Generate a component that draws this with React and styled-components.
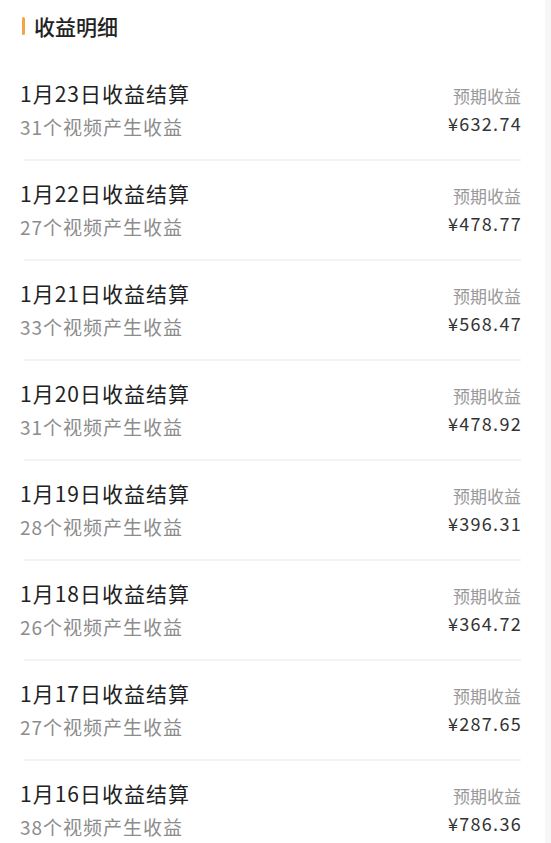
import React from "react";
import styled, { createGlobalStyle } from "styled-components";

const GlobalStyle = createGlobalStyle`
  * { box-sizing: border-box; }
  body {
    margin: 0;
    background: #f7f7f7;
    font-family: "Noto Sans CJK SC", "Noto Sans", sans-serif;
  }
`;

const records = [
  { date: "1月23日", count: 31, amount: "632.74" },
  { date: "1月22日", count: 27, amount: "478.77" },
  { date: "1月21日", count: 33, amount: "568.47" },
  { date: "1月20日", count: 31, amount: "478.92" },
  { date: "1月19日", count: 28, amount: "396.31" },
  { date: "1月18日", count: 26, amount: "364.72" },
  { date: "1月17日", count: 27, amount: "287.65" },
  { date: "1月16日", count: 38, amount: "786.36" },
];

export default function App() {
  return (
    <>
      <GlobalStyle />
      <Page>
        <Header>
          <Mark />
          <HeaderTitle>收益明细</HeaderTitle>
        </Header>
        <List>
          {records.map((r, i) => (
            <React.Fragment key={r.date}>
              {i > 0 && <Divider />}
              <Row>
                <Left>
                  <Title>{r.date}收益结算</Title>
                  <Sub>{r.count}个视频产生收益</Sub>
                </Left>
                <Right>
                  <Label>预期收益</Label>
                  <Amount>¥{r.amount}</Amount>
                </Right>
              </Row>
            </React.Fragment>
          ))}
        </List>
      </Page>
    </>
  );
}

const Page = styled.div`
  width: 545px;
  min-height: 843px;
  background: #fff;
`;

const Header = styled.div`
  display: flex;
  align-items: center;
  gap: 9px;
  padding: 12px 0 0 22px;
  height: 40px;
`;

const Mark = styled.span`
  width: 3px;
  height: 18px;
  border-radius: 2px;
  background: #f4a447;
`;

const HeaderTitle = styled.h2`
  margin: 0;
  font-size: 21px;
  font-weight: 500;
  color: #222;
  line-height: 28px;
`;

const List = styled.div`
  display: flex;
  flex-direction: column;
  padding: 21px 24px 0 20px;
`;

const Divider = styled.div`
  height: 2px;
  margin-left: 4px;
  background: #f3f3f3;
`;

const Row = styled.div`
  display: flex;
  justify-content: space-between;
  align-items: center;
  height: 98px;
`;

const Left = styled.div`
  display: flex;
  flex-direction: column;
  gap: 6px;
`;

const Title = styled.div`
  font-size: 21px;
  line-height: 28px;
  color: #222;
  letter-spacing: 1px;
`;

const Sub = styled.div`
  font-size: 19px;
  line-height: 28px;
  color: #8c8c8c;
  letter-spacing: 1px;
`;

const Right = styled.div`
  display: flex;
  flex-direction: column;
  align-items: flex-end;
  gap: 2px;
`;

const Label = styled.div`
  font-size: 17px;
  line-height: 24px;
  color: #999;
`;

const Amount = styled.div`
  font-size: 18px;
  line-height: 26px;
  color: #333;
  letter-spacing: 1.3px;
  margin-right: -1px;
`;
